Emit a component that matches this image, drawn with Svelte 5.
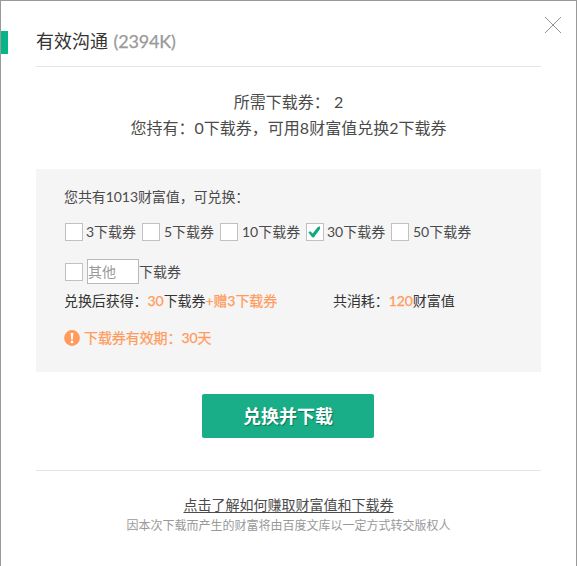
<script>
  const options = [
    { amount: 3, width: 77, gap: 3 },
    { amount: 5, width: 78, gap: 4 },
    { amount: 10, width: 86, gap: 4 },
    { amount: 30, width: 85, gap: 3 },
    { amount: 50, width: 90, gap: 4 }
  ];
  let selected = $state(30);
  let other = $state('');
</script>

<main class="dialog">
  <header>
    <span class="accent"></span>
    <h1>有效沟通 <span class="size">(2394K)</span></h1>
    <button class="close" aria-label="关闭">
      <svg width="17" height="16" viewBox="0 0 17 16"><path d="M0 0 16 16M16 0 0 16" /></svg>
    </button>
  </header>

  <section class="summary">
    <p class="need">所需下载券： 2</p>
    <p>您持有：0下载券，可用8财富值兑换2下载券</p>
  </section>

  <section class="panel">
    <p class="balance">您共有1013财富值，可兑换：</p>
    <div class="options">
      {#each options as o}
        <button class="option" style="width: {o.width}px; gap: {o.gap}px" onclick={() => (selected = o.amount)}>
          <span class="box">
            {#if selected === o.amount}
              <svg width="16" height="16" viewBox="0 0 16 16"><path d="M1.3 8.3 3.3 7.3 5.6 9.6 10.6 3.2 13 2.3V5L6.8 13.5 5.2 13.2Z" /></svg>
            {/if}
          </span>
          <span>{o.amount}下载券</span>
        </button>
      {/each}
    </div>
    <div class="custom">
      <span class="box"></span>
      <input type="text" placeholder="其他" bind:value={other} />
      <span>下载券</span>
    </div>
    <div class="result">
      <span class="gain">兑换后获得：<em>30</em>下载券<em class="bonus">+赠3下载券</em></span>
      <span>共消耗：<em>120</em>财富值</span>
    </div>
    <div class="expiry">
      <svg width="16" height="16" viewBox="0 0 16 16">
        <circle cx="8" cy="8" r="7.9" fill="#ff9b5c" />
        <path d="M6.7 3h2.6L8.8 9.4H7.2Z" fill="#fff" />
        <circle cx="8" cy="11.9" r="1.3" fill="#fff" />
      </svg>
      <span>下载券有效期：30天</span>
    </div>
  </section>

  <button class="submit">兑换并下载</button>

  <footer>
    <a href="#help">点击了解如何赚取财富值和下载券</a>
    <p>因本次下载而产生的财富将由百度文库以一定方式转交版权人</p>
  </footer>
</main>

<style>
  .dialog {
    box-sizing: border-box;
    width: 577px;
    height: 566px;
    overflow: hidden;
    display: flex;
    flex-direction: column;
    background: #fff;
    border: 1px solid #999;
    border-bottom: 0;
    color: #4b4b4b;
    font: 14px/20px Lato, "Noto Sans CJK SC", sans-serif;
    white-space: nowrap;
  }
  h1, p { margin: 0; font-weight: 400; }
  button { padding: 0; border: 0; background: none; color: inherit; font: inherit; cursor: pointer; }
  svg { display: block; }
  header {
    position: relative;
    box-sizing: border-box;
    height: 66px;
    margin: 0 35px;
    border-bottom: 1px solid #e5e5e5;
  }
  .accent { position: absolute; left: -35px; top: 30px; width: 7px; height: 23px; background: #06b688; }
  h1 { padding-top: 28px; font-size: 18px; line-height: 24px; color: #333; }
  .size { margin-left: 1px; color: #999; letter-spacing: -.2px; -webkit-text-stroke: .25px #999; }
  .close { position: absolute; right: -21px; top: 16px; }
  .close path { stroke: #777; stroke-width: .8; fill: none; }
  .summary {
    height: 102px;
    box-sizing: border-box;
    padding-top: 22px;
    text-align: center;
    font-size: 16px;
    line-height: 26px;
  }
  .panel { box-sizing: border-box; height: 203px; margin: 0 35px; padding: 18px 28px 0; background: #f5f5f5; }
  .balance { letter-spacing: -.08px; }
  .options { display: flex; margin: 15px 0 0 1px; }
  .option { display: flex; align-items: center; }
  .box {
    box-sizing: border-box;
    flex: none;
    width: 18px;
    height: 18px;
    border: 1px solid #c3c0c0;
    background: #fff;
  }
  .box path { fill: #0dab80; }
  .custom { display: flex; align-items: center; height: 25px; margin: 17px 0 0 1px; }
  input {
    box-sizing: border-box;
    width: 52px;
    height: 25px;
    margin: 0 0 0 4px;
    padding: 0;
    border: 1px solid #b8b8b8;
    border-radius: 0;
    background: #fff;
    font: inherit;
  }
  input::placeholder { color: #999; opacity: 1; }
  .result { display: flex; margin-top: 7px; color: #333; letter-spacing: -.08px; }
  .gain { width: 269px; }
  em { font-style: normal; color: #ff9b5c; -webkit-text-stroke: .25px #ff9b5c; }
  .expiry { display: flex; align-items: center; gap: 4px; margin-top: 17px; color: #ff9b5c; letter-spacing: -.08px; -webkit-text-stroke: .25px #ff9b5c; }
  .submit {
    width: 172px;
    height: 44px;
    margin: 22px 0 0 201px;
    border-radius: 2px;
    background: #19ae88;
    color: #fff;
    font-size: 18px;
    font-weight: 700;
    text-shadow: 1px 1px 1px #08775a;
  }
  footer {
    margin: 32px 35px 0;
    padding-top: 24px;
    border-top: 1px solid #e5e5e5;
    text-align: center;
  }
  a { color: #4b4b4b; text-underline-offset: 2px; }
  footer p { margin-top: 1px; color: #999; font-size: 12px; }
</style>
